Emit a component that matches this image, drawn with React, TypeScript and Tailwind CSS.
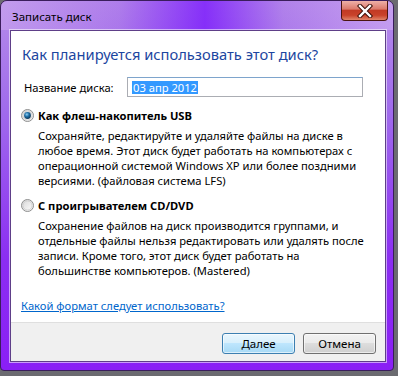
import React from 'react';

const font = { fontFamily: '"Noto Sans", "Open Sans", sans-serif' };

function Radio({ checked }: { checked: boolean }) {
  return (
    <svg width="13" height="13" viewBox="0 0 13 13" className="shrink-0">
      <defs>
        <linearGradient id={checked ? 'rg-on' : 'rg-off'} x1="0" y1="0" x2="1" y2="1">
          <stop offset="0" stopColor="#d6d6d6" />
          <stop offset="1" stopColor="#ffffff" />
        </linearGradient>
        <radialGradient id="dot" cx="0.4" cy="0.35" r="0.7">
          <stop offset="0" stopColor="#8fd0f5" />
          <stop offset="0.45" stopColor="#1f6fa6" />
          <stop offset="1" stopColor="#0b2f4d" />
        </radialGradient>
      </defs>
      <circle cx="6.5" cy="6.5" r="6" fill={`url(#${checked ? 'rg-on' : 'rg-off'})`} stroke="#8e8f8f" />
      <circle cx="6.5" cy="6.5" r="4.6" fill="none" stroke="#c9c9c9" strokeWidth="0.8" />
      {checked && <circle cx="6.5" cy="6.5" r="3.4" fill="url(#dot)" />}
    </svg>
  );
}

function Option({ checked, title, lines }: { checked: boolean; title: string; lines: string[] }) {
  return (
    <div className="flex flex-col">
      <div className="flex items-center h-[15px] pl-[10px]">
        <Radio checked={checked} />
        <span className="ml-[4px] font-bold text-[11.2px] leading-[15px] text-black">{title}</span>
      </div>
      <div className="mt-[5px] pl-[27px] text-[11.2px] leading-[15px] text-black">
        {lines.map(l => (
          <div key={l} className="whitespace-nowrap">{l}</div>
        ))}
      </div>
    </div>
  );
}

export default function App() {
  return (
    <div className="w-[398px] h-[376px] bg-[#6b6b70] overflow-hidden" style={font}>
      <div className="w-[394px] h-[371px] flex flex-col rounded-t-[7px] rounded-b-[4px] border border-[#3a1d5c] bg-[linear-gradient(180deg,#b58ce9_0%,#a06bec_30%,#8b2ef2_70%,#8a1ff5_100%)]">
        <div className="h-[29px] flex items-start justify-between rounded-t-[6px] bg-[linear-gradient(90deg,rgba(205,170,240,0.55)_0%,rgba(150,70,240,0.2)_30%,rgba(115,10,255,0.7)_52%,rgba(160,90,240,0.2)_72%,rgba(215,180,245,0.5)_100%)]">
          <span className="pl-[11px] pt-[8px] text-[11.5px] leading-[15px] text-black">Записать диск</span>
          <div className="mr-[5px] w-[47px] h-[20px] rounded-b-[4px] border border-t-0 border-[#4a1510] bg-[linear-gradient(180deg,#eeb0a8_0%,#dc7a6c_42%,#c23a25_50%,#c9422a_75%,#e0846a_100%)] flex items-center justify-center">
            <svg width="16" height="14" viewBox="0 0 16 14">
              <path d="M3 2 L13 12 M13 2 L3 12" stroke="#3a0d06" strokeWidth="4.4" strokeLinecap="square" />
              <path d="M3 2 L13 12 M13 2 L3 12" stroke="#ffffff" strokeWidth="2.4" strokeLinecap="square" />
            </svg>
          </div>
        </div>
        <div className="ml-[9px] w-[376px] h-[332px] flex flex-col bg-white border border-[#5e3f88] shadow-[0_0_0_1px_rgba(255,255,255,0.55)]">
          <div className="flex-1 flex flex-col">
            <div className="pl-[11px] pt-[13px] text-[14.7px] leading-[20px] text-[#1c46a0] whitespace-nowrap">
              Как планируется использовать этот диск?
            </div>
            <div className="mt-[13px] flex items-center pl-[13px]">
              <span className="w-[103px] text-[11.2px] leading-[15px] text-black">Название диска:</span>
              <div className="w-[236px] h-[20px] border border-[#abadb3] border-t-[#7ea4cc] flex items-center pl-[4px]">
                <span className="bg-[#3399ff] text-white text-[11.2px] leading-[13px] px-[1px]">03 апр 2012</span>
              </div>
            </div>
            <div className="mt-[11px]">
              <Option
                checked
                title="Как флеш-накопитель USB"
                lines={[
                  'Сохраняйте, редактируйте и удаляйте файлы на диске в',
                  'любое время. Этот диск будет работать на компьютерах с',
                  'операционной системой Windows XP или более поздними',
                  'версиями. (файловая система LFS)',
                ]}
              />
            </div>
            <div className="mt-[10px]">
              <Option
                checked={false}
                title="С проигрывателем CD/DVD"
                lines={[
                  'Сохранение файлов на диск производится группами, и',
                  'отдельные файлы нельзя редактировать или удалять после',
                  'записи. Кроме того, этот диск будет работать на',
                  'большинстве компьютеров. (Mastered)',
                ]}
              />
            </div>
            <div className="mt-[14px] pl-[10px]">
              <span className="text-[11.2px] leading-[15px] text-[#0066cc] underline">Какой формат следует использовать?</span>
            </div>
          </div>
          <div className="h-[39px] border-t border-[#dfdfdf] bg-[#f0f0f0] flex justify-end gap-[8px] pr-[9px] pt-[10px]">
            <button className="w-[73px] h-[21px] rounded-[3px] border border-[#3c7fb1] bg-[linear-gradient(180deg,#eaf6fd_0%,#d9f0fc_45%,#bee6fd_50%,#a7d9f5_100%)] shadow-[inset_0_0_0_1px_rgba(255,255,255,0.6)] text-[11.5px] leading-[15px] text-black">
              Далее
            </button>
            <button className="w-[73px] h-[21px] rounded-[3px] border border-[#707070] bg-[linear-gradient(180deg,#f2f2f2_0%,#ebebeb_45%,#dddddd_50%,#cfcfcf_100%)] shadow-[inset_0_0_0_1px_rgba(255,255,255,0.6)] text-[11.5px] leading-[15px] text-black">
              Отмена
            </button>
          </div>
        </div>
      </div>
    </div>
  );
}
